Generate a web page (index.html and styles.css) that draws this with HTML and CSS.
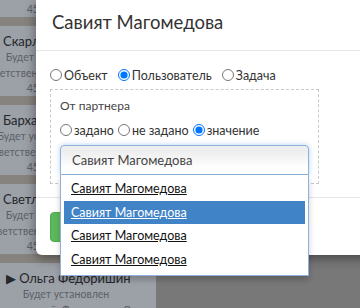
FILE: index.html
```html
<!DOCTYPE html>
<html lang="ru">

<head>
    <meta charset="UTF-8">
    <meta name="viewport" content="width=device-width, initial-scale=1.0">
    <title>Задачи</title>
    <link rel="stylesheet" href="styles.css">
</head>

<body>
    <div class="task-list">
        <div class="task">
            <div class="task-name">Анна Лебедева</div>
            <div class="task-line">Будет установлен завтра</div>
            <div class="task-line">Ответственный: Лебедева Анна</div>
            <div class="task-line task-sum">45000 ₽ / месяц</div>
        </div>
        <div class="task">
            <div class="task-name">Скарлетт Иванова</div>
            <div class="task-line">Будет установлен завтра</div>
            <div class="task-line">Ответственный: Иванова Скарлетт</div>
            <div class="task-line task-sum">45000 ₽ / месяц</div>
        </div>
        <div class="task">
            <div class="task-name">Бархатова Елена</div>
            <div class="task-line">Будет установлен в пятницу</div>
            <div class="task-line">Ответственный: Бархатова Елена</div>
            <div class="task-line task-sum">45000 ₽ / месяц</div>
        </div>
        <div class="task">
            <div class="task-name">Светлана Орлова</div>
            <div class="task-line">Будет установлен завтра</div>
            <div class="task-line">Ответственный: Орлова Светлана</div>
            <div class="task-line task-sum">45000 ₽ / месяц</div>
        </div>
        <div class="task">
            <div class="task-name task-open">&#9654; Ольга Федоришин</div>
            <div class="task-line">Будет установлен</div>
            <div class="task-line">Ответственный: Федоришин Ольга</div>
        </div>
    </div>

    <div class="modal">
        <div class="modal-header">
            <h4 class="modal-title">Савият Магомедова</h4>
        </div>
        <div class="modal-body">
            <div class="radio-row">
                <label><input type="radio" name="kind">Объект</label>
                <label><input type="radio" name="kind" checked>Пользователь</label>
                <label><input type="radio" name="kind">Задача</label>
            </div>
            <div class="partner-box">
                <div class="partner-title">От партнера</div>
                <div class="radio-row small">
                    <label><input type="radio" name="partner">задано</label>
                    <label><input type="radio" name="partner">не задано</label>
                    <label><input type="radio" name="partner" checked>значение</label>
                </div>
                <div class="chosen">
                    <div class="chosen-single">Савият Магомедова</div>
                    <ul class="chosen-drop">
                        <li>Савият Магомедова</li>
                        <li class="highlighted">Савият Магомедова</li>
                        <li>Савият Магомедова</li>
                        <li>Савият Магомедова</li>
                    </ul>
                </div>
            </div>
        </div>
        <div class="modal-footer">
            <button type="button" class="btn-save">Сохранить</button>
        </div>
    </div>
</body>

</html>
```

FILE: styles.css
```css
* {
  box-sizing: border-box;
}

body {
  margin: 0;
  height: 308px;
  overflow: hidden;
  position: relative;
  background-color: #787878;
  font-family: Lato, "Open Sans", Arial, sans-serif;
}

/* dimmed page under the modal */
.task-list {
  width: 156px;
  margin-top: -53px;
  background-color: #86827e;
}

.task {
  background-color: #9ca0a7;
  padding: 7px 24px 1px 0;
  margin-bottom: 9px;
  white-space: nowrap;
}

.task-name {
  font-size: 13px;
  line-height: 16px;
  color: #24272c;
  padding-left: 3px;
}

.task-open {
  padding-left: 6px;
}

.task-line {
  display: flex;
  justify-content: center;
  font-size: 10.5px;
  line-height: 16px;
  color: #5d6168;
}

.task-sum {
  line-height: 14px;
}

/* modal */
.modal {
  position: absolute;
  left: 36px;
  top: 0;
  width: 340px;
  background-color: #fff;
  border-radius: 0 0 0 6px;
  box-shadow: 0 3px 12px rgba(0, 0, 0, 0.45);
}

.modal-header {
  padding: 10px 16px 16px;
  border-bottom: 1px solid #e5e5e5;
}

.modal-title {
  margin: 0;
  font-size: 18.5px;
  line-height: 24px;
  font-weight: 400;
  color: #333;
}

.modal-body {
  padding: 15px 14px 13px;
}

.radio-row {
  display: flex;
  align-items: center;
  height: 18px;
  font-size: 12.5px;
  color: #333;
}

.radio-row label {
  display: flex;
  align-items: center;
  margin-right: 10px;
}

.radio-row input {
  width: 12px;
  height: 12px;
  margin: 0 2px 0 0;
}

.partner-box {
  width: 269px;
  margin-top: 5px;
  padding: 8px 9px 8px;
  border: 1px dashed #c9c9c9;
}

.partner-title {
  font-size: 12px;
  line-height: 16px;
  color: #444;
}

.radio-row.small {
  height: 16px;
  margin-top: 8px;
}

.radio-row.small label {
  margin-right: 4px;
}

.chosen {
  position: relative;
  width: 249px;
  margin-top: 7px;
}

.chosen-single {
  height: 30px;
  padding-left: 11px;
  line-height: 28px;
  font-size: 13px;
  color: #444;
  border: 1px solid #8eb0d9;
  border-radius: 4px 4px 0 0;
  background: linear-gradient(#eee 20%, #fff 80%);
  box-shadow: 0 0 5px rgba(80, 150, 230, 0.45);
}

.chosen-drop {
  position: absolute;
  z-index: 10;
  top: 30px;
  left: 0;
  width: 249px;
  margin: 0;
  padding: 2px 3px 4px;
  list-style: none;
  background-color: #fff;
  border: 1px solid #8eb0d9;
  border-top: 0;
  box-shadow: 0 4px 6px rgba(0, 0, 0, 0.2);
}

.chosen-drop li {
  height: 23.5px;
  line-height: 23.5px;
  padding-left: 7px;
  font-size: 12.5px;
  color: #111;
  text-decoration: underline;
}

.chosen-drop li.highlighted {
  background-color: #4083c7;
  color: #fff;
}

.modal-footer {
  padding: 14px 14px 13px;
  border-top: 1px solid #e5e5e5;
}

.btn-save {
  height: 30px;
  padding: 0 16px;
  font-family: inherit;
  font-size: 13px;
  color: #fff;
  background-color: #5cb85c;
  border: 1px solid #4cae4c;
  border-radius: 4px;
}
```
